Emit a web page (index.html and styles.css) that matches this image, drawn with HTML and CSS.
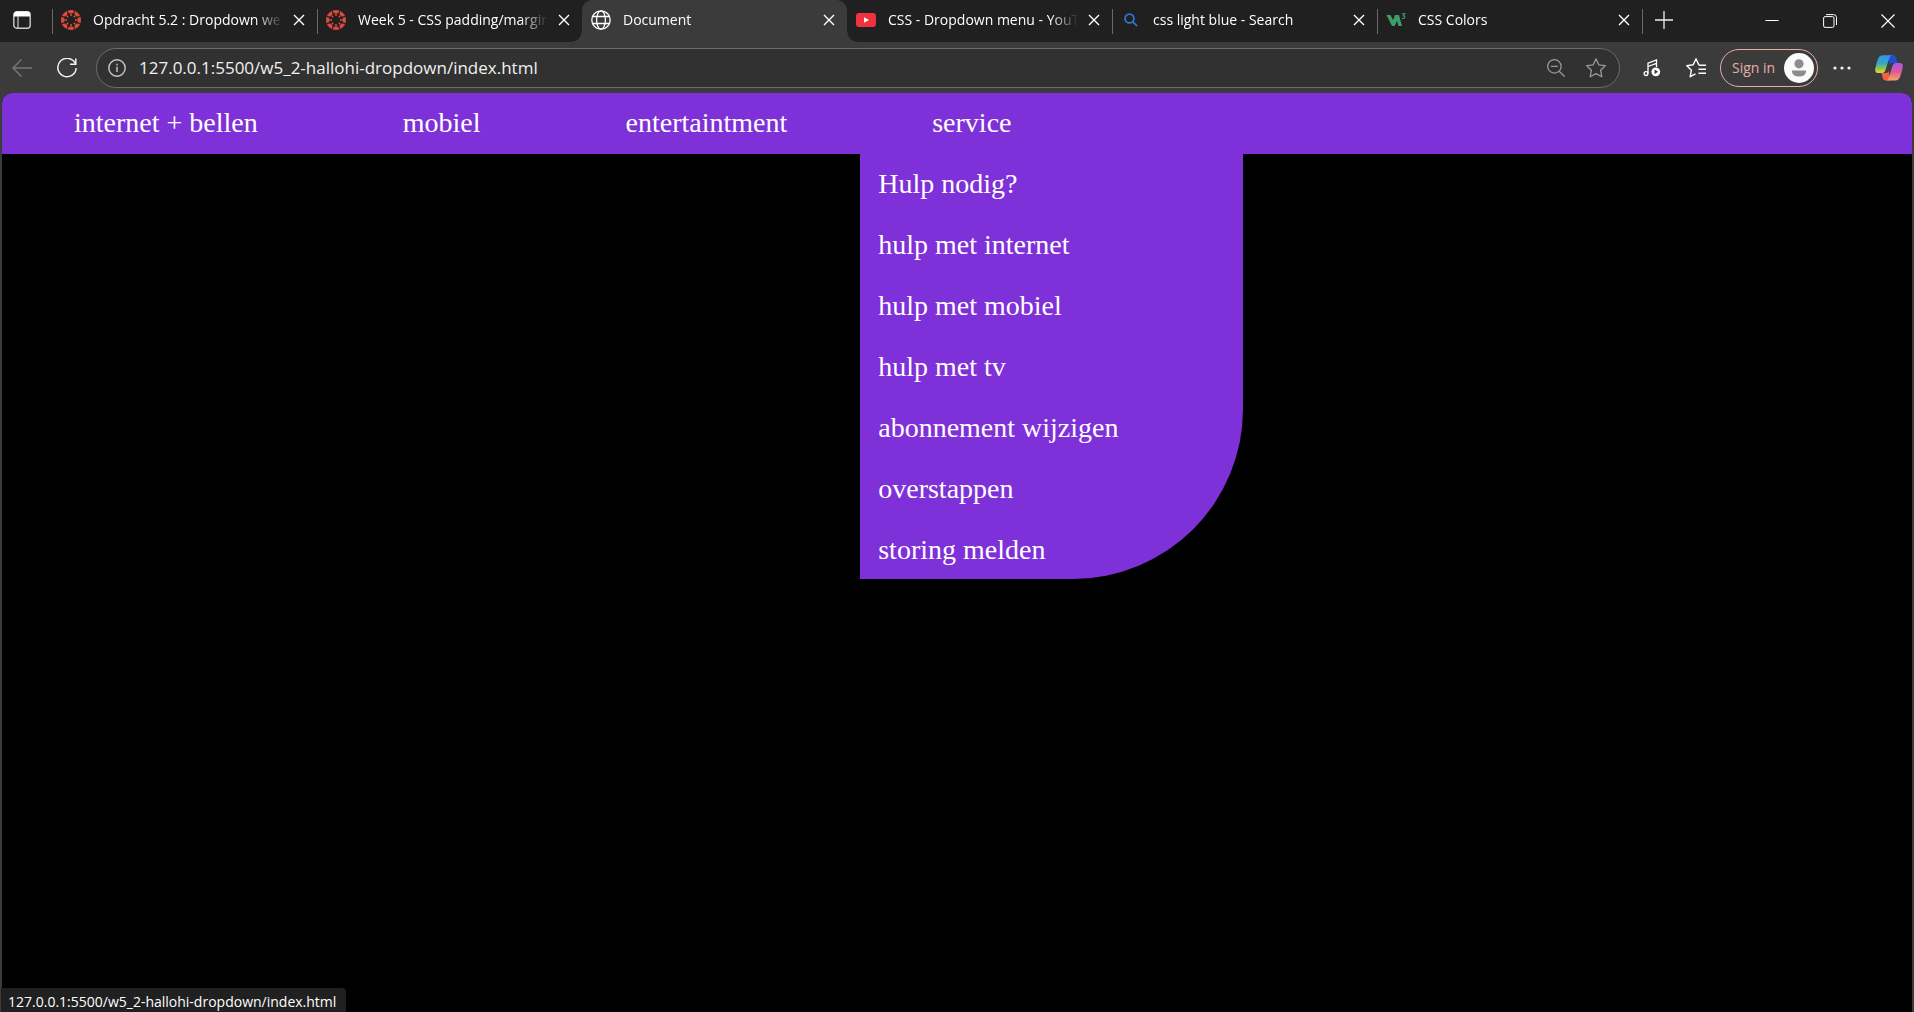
FILE: index.html
```html
<!DOCTYPE html>
<html lang="nl">
<head>
<meta charset="utf-8">
<title>Document</title>
<link rel="stylesheet" href="styles.css">
</head>
<body>
<svg width="0" height="0" class="defs" aria-hidden="true">
  <defs>
    <symbol id="close" viewBox="0 0 12 12"><path d="M1 1l10 10M11 1L1 11" fill="none" stroke="currentColor" stroke-width="1.4"/></symbol>
    <g id="petal"><path d="M-3.3-9.500Q0-10.400 3.300-9.500Q2.600-6.200 0-6.200T-3.300-9.500Z"/><circle cy="-4.900" r="1"/></g>
    <symbol id="canvas" viewBox="-10 -10 20 20"><g fill="#dc4a3b"><use href="#petal"/><use href="#petal" transform="rotate(45)"/><use href="#petal" transform="rotate(90)"/><use href="#petal" transform="rotate(135)"/><use href="#petal" transform="rotate(180)"/><use href="#petal" transform="rotate(225)"/><use href="#petal" transform="rotate(270)"/><use href="#petal" transform="rotate(315)"/></g></symbol>
    <linearGradient id="cpA" x1="0" y1="0" x2="0" y2="1"><stop offset="0" stop-color="#3a8ff0"/><stop offset=".45" stop-color="#35a9c0"/><stop offset=".75" stop-color="#8cc653"/><stop offset="1" stop-color="#f5d13c"/></linearGradient>
    <linearGradient id="cpB" x1="0" y1="0" x2="0" y2="1"><stop offset="0" stop-color="#a557ee"/><stop offset=".5" stop-color="#e0589a"/><stop offset="1" stop-color="#f5a55c"/></linearGradient>
  </defs>
</svg>

<header class="browser">
  <div class="tabstrip">
    <button class="tab-actions" aria-label="Tab actions">
      <svg width="18" height="18" viewBox="0 0 18 18"><rect x=".8" y=".8" width="16.4" height="16.4" rx="3" fill="none" stroke="#ccc" stroke-width="1.4"/><path d="M1 5.5V3.5A3 3 0 0 1 4 .5h10a3 3 0 0 1 3 3v2z" fill="#fff"/><path d="M5 5v12" stroke="#ccc" stroke-width="1.2"/></svg>
    </button>
    <div class="tabs">
      <div class="tab">
        <svg class="favicon"><use href="#canvas"/></svg>
        <span class="tab-title">Opdracht 5.2 : Dropdown website</span>
        <button class="tab-close" aria-label="Close tab"><svg><use href="#close"/></svg></button>
      </div>
      <div class="tab">
        <svg class="favicon"><use href="#canvas"/></svg>
        <span class="tab-title">Week 5 - CSS padding/margin</span>
        <button class="tab-close" aria-label="Close tab"><svg><use href="#close"/></svg></button>
      </div>
      <div class="tab active">
        <svg class="favicon" viewBox="0 0 20 20" fill="none" stroke="#fff" stroke-width="1.3"><circle cx="10" cy="10" r="9.2"/><ellipse cx="10" cy="10" rx="4.4" ry="9.2"/><path d="M1.8 6.5h16.4M1.8 13.5h16.4"/></svg>
        <span class="tab-title">Document</span>
        <button class="tab-close" aria-label="Close tab"><svg><use href="#close"/></svg></button>
      </div>
      <div class="tab">
        <svg class="favicon" viewBox="0 0 20 20"><rect y="3" width="20" height="14" rx="3" fill="#ee323e"/><path d="M8 7.2v5.6l5-2.8z" fill="#fff"/></svg>
        <span class="tab-title">CSS - Dropdown menu - YouTube</span>
        <button class="tab-close" aria-label="Close tab"><svg><use href="#close"/></svg></button>
      </div>
      <div class="tab">
        <svg class="favicon" viewBox="0 0 20 20" fill="none" stroke="#2f74cf" stroke-width="1.8"><circle cx="8.5" cy="8.5" r="4.4"/><path d="M11.8 11.8l4.400 4.400"/></svg>
        <span class="tab-title">css light blue - Search</span>
        <button class="tab-close" aria-label="Close tab"><svg><use href="#close"/></svg></button>
      </div>
      <div class="tab">
        <svg class="favicon" viewBox="0 0 20 20"><path d="M.5 5h4l2.500 5 2-5h4l3 11h-3.600L11 11l-2.400 5H6z" fill="#3f9c6b"/><path d="M15.800 3.800h3l-1.600 2q1.800.1 1.600 1.600-.5 1.700-3 .9" fill="none" stroke="#3f9c6b" stroke-width="1.1"/></svg>
        <span class="tab-title">CSS Colors</span>
        <button class="tab-close" aria-label="Close tab"><svg><use href="#close"/></svg></button>
      </div>
      <button class="new-tab" aria-label="New tab"><svg width="18" height="18" viewBox="0 0 18 18"><path d="M9 0v18M0 9h18" stroke="#eee" stroke-width="1.3"/></svg></button>
    </div>
    <div class="window-buttons">
      <button aria-label="Minimize"><svg width="14" height="14" viewBox="0 0 14 14"><path d="M.5 6.500h13" stroke="#fff"/></svg></button>
      <button aria-label="Restore"><svg width="14" height="14" viewBox="0 0 14 14" fill="none" stroke="#fff"><rect x=".6" y="2.6" width="10.4" height="10.800" rx="1.5"/><path d="M3 .6h7.500a3 3 0 0 1 3 3V11"/></svg></button>
      <button aria-label="Close"><svg width="14" height="14" viewBox="0 0 14 14"><path d="M.5.5l13 13M13.500.5l-13 13" stroke="#fff" stroke-width="1.2"/></svg></button>
    </div>
  </div>

  <div class="toolbar">
    <button class="tool" aria-label="Back"><svg width="20" height="18" viewBox="0 0 20 18" fill="none" stroke="#777" stroke-width="1.4"><path d="M20 9H1M9.500.5L1 9l8.500 8.500"/></svg></button>
    <button class="tool" aria-label="Refresh"><svg width="20" height="20" viewBox="0 0 20 20" fill="none" stroke="#f2f2f2" stroke-width="1.5"><path d="M18.600 6.200A9.200 9.200 0 1 0 19.200 10M18.800.5v5.800H13"/></svg></button>
    <form class="address">
      <svg width="18" height="18" viewBox="0 0 18 18" fill="none" stroke="#c9c9c9" stroke-width="1.4"><circle cx="9" cy="9" r="8.2"/><path d="M9 7.800V13M9 4.800v1.600"/></svg>
      <input type="text" aria-label="Address" value="127.0.0.1:5500/w5_2-hallohi-dropdown/index.html">
      <button type="button" class="address-button" aria-label="Zoom"><svg width="18" height="18" viewBox="0 0 18 18" fill="none" stroke="#999" stroke-width="1.3"><circle cx="7.4" cy="7.4" r="6.7"/><path d="M12.200 12.200l5.400 5.400M4 7.400h6.800"/></svg></button>
      <button type="button" class="address-button" aria-label="Add favorite"><svg width="20" height="20" viewBox="0 0 20 20" fill="none" stroke="#999" stroke-width="1.3" stroke-linejoin="round"><path d="M10 .9l2.800 5.900 6.500.9-4.700 4.500 1.200 6.500-5.800-3.100-5.800 3.100 1.200-6.500L.7 7.700l6.500-.9z"/></svg></button>
    </form>
    <button class="tool wide" aria-label="Media"><svg width="18" height="18" viewBox="0 0 18 18" fill="none" stroke="#fff" stroke-width="1.3"><path d="M5 14.500V4.200L13.500 1v7M5 7.500l8.500-3.200"/><circle cx="3" cy="14.600" r="1.900"/><circle cx="12.800" cy="12.800" r="4.400" fill="#fff" stroke="none"/><path d="M11.600 10.600v4.400l3.400-2.200z" fill="#333" stroke="none"/></svg></button>
    <button class="tool wide" aria-label="Favorites"><svg width="20" height="20" viewBox="0 0 20 20" fill="none" stroke="#fff" stroke-width="1.4" stroke-linejoin="round"><path d="M13 7.200L10 .8 7.200 6.800.8 7.700l4.600 4.500-1.200 6.500 5.300-2.900M13 7.200h7M12.500 11.200H20M12.500 15.200H20"/></svg></button>
    <button class="sign-in">Sign in
      <svg width="30" height="30" viewBox="0 0 30 30"><circle cx="15" cy="15" r="15" fill="#fafafa"/><circle cx="15" cy="10.800" r="4.600" fill="#8c8c8c"/><path d="M8 17.500h14v1.500q-1 4.500-7 4.500t-7-4.500z" fill="#8c8c8c"/></svg>
    </button>
    <button class="tool wide" aria-label="Settings and more"><svg width="18" height="4" viewBox="0 0 18 4" fill="#f2f2f2"><circle cx="2" cy="2" r="1.6"/><circle cx="9" cy="2" r="1.6"/><circle cx="16" cy="2" r="1.6"/></svg></button>
    <button class="tool copilot" aria-label="Copilot"><svg width="28" height="26" viewBox="0 0 28 26"><path d="M13 0h5q2.200 0 3 2.600L22.500 8H17q-2 0-2.600 2z" fill="#1d4fd0"/><path d="M15 25.500h-4.500q-2 0-2.800-2.500L6.500 18H11q2 0 2.700-2z" fill="#f0643c"/><path d="M7.500.3H17q-2 .3-2.800 3L10.500 15q-.9 3-3.500 3H3.500Q-.5 18 .3 13.500q1-5.500 3-10.500 1.200-2.700 4.200-2.700z" fill="url(#cpA)"/><path d="M20.500 25.500H11q2-.3 2.800-3L17.500 11q.9-3 3.500-3h3.500q4 0 3.200 4.500-1 5.500-3 10.300-1.200 2.700-4.200 2.700z" fill="url(#cpB)"/></svg></button>
  </div>
</header>

<main class="page">
  <nav class="menu">
    <ul class="menu-list">
      <li class="menu-item"><a href="#">internet + bellen</a></li>
      <li class="menu-item"><a href="#">mobiel</a></li>
      <li class="menu-item"><a href="#">entertaintment</a></li>
      <li class="menu-item"><a href="#">service</a>
        <ul class="dropdown">
          <li><a href="#">Hulp nodig?</a></li>
          <li><a href="#">hulp met internet</a></li>
          <li><a href="#">hulp met mobiel</a></li>
          <li><a href="#">hulp met tv</a></li>
          <li><a href="#">abonnement wijzigen</a></li>
          <li><a href="#">overstappen</a></li>
          <li><a href="#">storing melden</a></li>
        </ul>
      </li>
    </ul>
  </nav>
</main>
<div class="status">127.0.0.1:5500/w5_2-hallohi-dropdown/index.html</div>
</body>
</html>
```
FILE: styles.css
```css
* { box-sizing: border-box; }

body {
  margin: 0;
  min-height: 100vh;
  display: flex;
  flex-direction: column;
  background: #3b3b3b;
  color: #fff;
  font-family: "Open Sans", "Noto Sans", sans-serif;
  font-size: 14px;
}

button {
  display: flex;
  align-items: center;
  justify-content: center;
  padding: 0;
  border: 0;
  background: none;
  color: inherit;
  font: inherit;
}

svg { display: block; flex: none; }
.defs { position: absolute; }

/* Tab strip */
.tabstrip {
  display: flex;
  height: 42px;
  background: #202020;
}
.tab-actions { width: 44px; height: 40px; flex: none; }
.tabs { display: flex; flex: 1; min-width: 0; padding-left: 8px; }
.tab {
  position: relative;
  display: flex;
  align-items: center;
  flex: 0 1 265px;
  min-width: 0;
  height: 40px;
  padding: 0 2px 0 9px;
}
.tab::before, .new-tab::before {
  content: "";
  position: absolute;
  left: 0;
  top: 9px;
  width: 1px;
  height: 25px;
  background: #6a6a6a;
}
.tab.active { height: 42px; padding-bottom: 2px; background: #3b3b3b; border-radius: 10px 10px 0 0; }
.tab.active + .tab::before { display: none; }
.tab.active::before, .tab.active::after {
  content: "";
  position: absolute;
  left: -10px;
  top: 32px;
  width: 10px;
  height: 10px;
  background: radial-gradient(circle at 0 0, transparent 9px, #3b3b3b 10px);
}
.tab.active::after {
  left: auto;
  right: -10px;
  background: radial-gradient(circle at 100% 0, transparent 9px, #3b3b3b 10px);
}
.favicon { width: 20px; height: 20px; }
.tab-title {
  flex: 1;
  min-width: 0;
  margin-left: 12px;
  overflow: hidden;
  white-space: nowrap;
  line-height: 20px;
  mask-image: linear-gradient(to right, #000 calc(100% - 28px), transparent);
}
.tab-close { width: 32px; height: 32px; }
.tab-close svg { width: 12px; height: 12px; }
.new-tab { position: relative; width: 44px; height: 40px; }
.window-buttons { display: flex; gap: 6px; }
.window-buttons button { width: 52px; height: 42px; }

/* Toolbar */
.toolbar {
  display: flex;
  align-items: center;
  height: 51px;
  padding-left: 6px;
}
.tool { width: 32px; height: 32px; margin-right: 13px; flex: none; }
.tool.wide { width: 44px; margin: 0; }
.tool.copilot { width: 50px; margin: 0; }
.address {
  display: flex;
  align-items: center;
  flex: 1;
  min-width: 0;
  height: 40px;
  margin-right: 10px;
  padding: 0 3px 0 11px;
  border: 1px solid #6b6b6b;
  border-radius: 20px;
  background: #313131;
}
.address input {
  flex: 1;
  min-width: 0;
  margin-left: 13px;
  padding: 0;
  border: 0;
  outline: 0;
  background: none;
  color: #f0f0f0;
  font: 17px/24px "Open Sans", "Noto Sans", sans-serif;
}
.address-button { width: 40px; height: 32px; }
.sign-in {
  width: 98px;
  height: 38px;
  margin: 0 2px;
  padding: 0 3px 0 11px;
  justify-content: space-between;
  border: 1px solid #e8aea8;
  border-radius: 19px;
  color: #e8aea8;
  line-height: 20px;
  white-space: nowrap;
}

/* Page */
.page {
  flex: 1;
  margin: 0 2px;
  border-radius: 10px 10px 0 0;
  background: #000;
  font: 28px/33px "Liberation Serif", "Times New Roman", serif;
}
.page a { color: #fff; text-decoration: none; }
.menu { border-radius: 10px 10px 0 0; background: #7f31d9; }
.menu-list, .dropdown { margin: 0; padding: 0; list-style: none; }
.menu-list { display: flex; gap: 1px; }
.menu-item { position: relative; padding: 13px 72px 15px; white-space: nowrap; }
.dropdown {
  position: absolute;
  top: 100%;
  left: 0;
  display: flex;
  flex-direction: column;
  gap: 28px;
  width: 20vw;
  padding: 13px 18px;
  border-bottom-right-radius: 170px;
  background: #7f31d9;
}

/* Link preview */
.status {
  position: fixed;
  left: 1px;
  bottom: 0;
  height: 24px;
  padding: 0 10px 0 7px;
  border-top-right-radius: 4px;
  background: #202020;
  line-height: 27px;
}
```
